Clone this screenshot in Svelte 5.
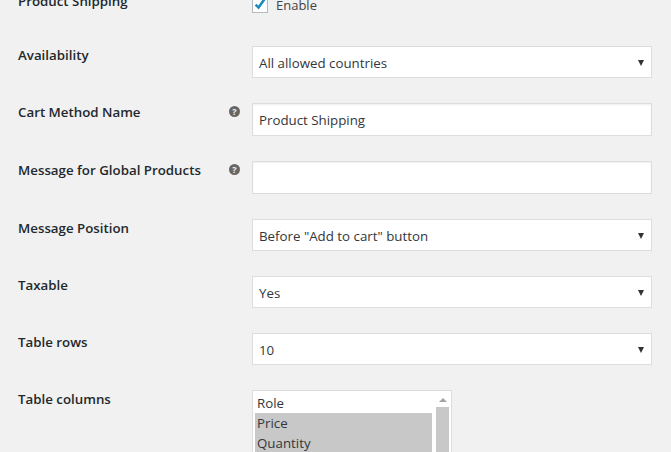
<script>
  const rows = [
    { label: 'Availability', type: 'select', value: 'All allowed countries' },
    { label: 'Cart Method Name', type: 'input', value: 'Product Shipping', help: true },
    { label: 'Message for Global Products', type: 'input', value: '', help: true },
    { label: 'Message Position', type: 'select', value: 'Before "Add to cart" button' },
    { label: 'Taxable', type: 'select', value: 'Yes' },
    { label: 'Table rows', type: 'select', value: '10' }
  ];
</script>

<div class="page">
  <div class="row first">
    <div class="label">Product Shipping</div>
    <label class="check">
      <span class="box">
        <svg width="16" height="16" viewBox="0 0 16 16"><path d="M3.6 7.6 L6.6 10.6 L12.4 2.2" fill="none" stroke="#1e8cbe" stroke-width="2.6"/></svg>
      </span>
      <span>Enable</span>
    </label>
  </div>
  {#each rows as r}
    <div class="row" class:tall={r.type === 'input'}>
      <div class="label">{r.label}</div>
      <div class="help">
        {#if r.help}<span class="q">?</span>{/if}
      </div>
      {#if r.type === 'select'}
        <div class="field select"><span>{r.value}</span><i class="arrow"></i></div>
      {:else}
        <div class="field input">{r.value}</div>
      {/if}
    </div>
  {/each}
  <div class="row">
    <div class="label">Table columns</div>
    <div class="help"></div>
    <div class="list">
      <div class="opts">
        <div class="opt">Role</div>
        <div class="opt sel">Price</div>
        <div class="opt sel">Quantity</div>
      </div>
      <div class="bar">
        <i class="up"></i>
        <div class="thumb"></div>
      </div>
    </div>
  </div>
</div>

<style>
  :global(body) {
    margin: 0;
    background: #f1f1f1;
    overflow: hidden;
  }
  .page {
    height: 452px;
    overflow: hidden;
    font-family: "Open Sans", sans-serif;
    font-size: 13.3px;
    color: #444;
    box-sizing: border-box;
  }
  .row {
    display: flex;
    height: 57px;
    padding-left: 18px;
    box-sizing: border-box;
  }
  .row.tall { height: 58px; }
  .row.first { height: 46px; }
  .first .label {
    width: 234px;
    margin-top: -8px;
  }
  .label {
    width: 208px;
    font-weight: 600;
    color: #23282d;
    line-height: 18px;
    flex: none;
    white-space: nowrap;
    font-size: 13.3px;
  }
  .help {
    width: 26px;
    flex: none;
  }
  .q {
    display: block;
    width: 11px;
    height: 11px;
    margin: 3px 0 0 3px;
    border-radius: 50%;
    background: #666;
    color: #f1f1f1;
    font: 700 9px/11px "Open Sans", sans-serif;
    text-align: center;
  }
  .check {
    display: flex;
    gap: 8px;
    font-size: 13px;
    color: #444;
    line-height: 20px;
    margin-top: -5px;
  }
  .box {
    width: 16px;
    height: 16px;
    margin-top: 2px;
    background: #fff;
    border: 1px solid #b4b9be;
    box-sizing: border-box;
    display: block;
    overflow: visible;
  }
  .box svg { display: block; margin: -1px; }
  .field {
    width: 400px;
    box-sizing: border-box;
    background: #fff;
    border: 1px solid #ddd;
    box-shadow: inset 0 1px 2px rgba(0,0,0,.07);
    color: #32373c;
    font-size: 13.3px;
    padding: 1px 6px 0;
    display: flex;
    align-items: center;
    justify-content: space-between;
  }
  .select { height: 32px; box-shadow: none; }
  .input { height: 33px; }
  .arrow {
    width: 0;
    height: 0;
    border-left: 3px solid transparent;
    border-right: 3px solid transparent;
    border-top: 6px solid #333;
    margin-right: 1px;
  }
  .list {
    width: 200px;
    height: 90px;
    box-sizing: border-box;
    border: 1px solid #ddd;
    background: #fff;
    display: flex;
    padding: 2px 0 0 2px;
    color: #32373c;
    font-size: 13.3px;
  }
  .opts { width: 177px; flex: none; }
  .opt {
    height: 20px;
    line-height: 20px;
    padding-left: 2px;
  }
  .sel { background: #c8c8c8; }
  .bar {
    margin-left: 2px;
    width: 17px;
    flex: none;
    display: flex;
    flex-direction: column;
    align-items: center;
  }
  .up {
    width: 0;
    height: 0;
    border-left: 4px solid transparent;
    border-right: 4px solid transparent;
    border-bottom: 4px solid #a3a3a3;
    margin: 5px 0 5px;
  }
  .thumb {
    width: 13px;
    flex: 1;
    background: #c8c8c8;
  }
</style>
